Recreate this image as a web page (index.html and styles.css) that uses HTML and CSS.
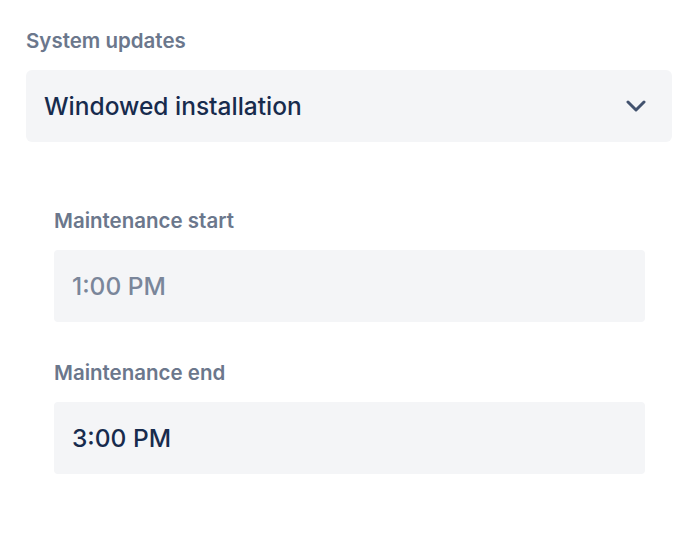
FILE: index.html
```html
<!DOCTYPE html>
<html lang="en">
<head>
    <meta charset="UTF-8"/>
    <meta name="viewport" content="width=device-width, initial-scale=1.0"/>
    <title>System updates</title>
    <link rel="stylesheet" href="styles.css">
</head>
<body>

<div class="container">
    <label class="field-label">System updates</label>
    <div class="select">
        <span class="select-value">Windowed installation</span>
        <svg class="chevron" width="20" height="12" viewBox="0 0 20 12">
            <path d="M2 2 L10 10 L18 2" fill="none" stroke="#42526e" stroke-width="3" stroke-linecap="round" stroke-linejoin="round"/>
        </svg>
    </div>

    <div class="window-fields">
        <label class="field-label">Maintenance start</label>
        <div class="time-input placeholder">1:00 PM</div>

        <label class="field-label second">Maintenance end</label>
        <div class="time-input">3:00 PM</div>
    </div>
</div>

</body>
</html>
```

FILE: styles.css
```css
* {
    box-sizing: border-box;
}

body {
    margin: 0;
    font-family: Inter, "Noto Sans", sans-serif;
    background: #fff;
}

.container {
    display: flex;
    flex-direction: column;
    padding: 29px 26px;
}

.field-label {
    display: block;
    font-size: 20.5px;
    line-height: 24px;
    font-weight: 600;
    color: #6b778c;
    margin-bottom: 17px;
}

.select {
    display: flex;
    align-items: center;
    justify-content: space-between;
    height: 72px;
    padding: 0 26px 0 18px;
    background: #f4f5f7;
    border-radius: 6px;
}

.select-value {
    font-size: 24.5px;
    font-weight: 500;
    color: #172b4d;
}

.window-fields {
    display: flex;
    flex-direction: column;
    padding: 67px 27px 0 28px;
}

.field-label.second {
    margin-top: 39px;
}

.time-input {
    display: flex;
    align-items: center;
    height: 72px;
    padding: 0 18px;
    background: #f4f5f7;
    border-radius: 4px;
    font-size: 24.5px;
    font-weight: 500;
    color: #172b4d;
}

.time-input.placeholder {
    color: #7a869a;
}
```
